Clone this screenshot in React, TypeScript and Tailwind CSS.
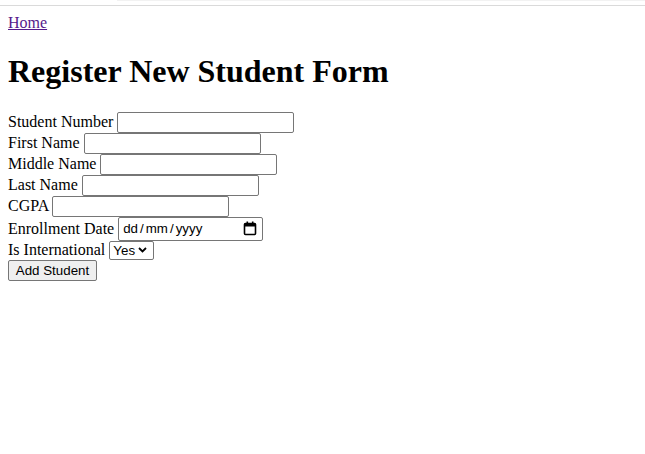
const fieldClass =
  "inline-block align-baseline h-[21px] w-[177px] border border-[#767676] rounded-[2px] bg-white px-[2px] py-[1px] text-[13.33px] leading-[normal] font-['Liberation_Sans',Arial,sans-serif] text-black outline-none";

const CalendarIcon = () => (
  <svg width="14" height="15" viewBox="0 0 14 15" className="block">
    <rect x="1.5" y="2.5" width="11" height="11" rx="1" fill="none" stroke="#000" strokeWidth="1.6" />
    <rect x="1.5" y="2.5" width="11" height="3" fill="#000" />
    <rect x="3.5" y="0.5" width="1.6" height="3" fill="#000" />
    <rect x="8.9" y="0.5" width="1.6" height="3" fill="#000" />
  </svg>
);

const Chevron = () => (
  <svg width="9" height="6" viewBox="0 0 9 6" className="block">
    <path d="M1 1 L4.5 4.5 L8 1" fill="none" stroke="#000" strokeWidth="1.8" />
  </svg>
);

const App = () => {
  return (
    <div className="min-h-[454px] bg-white text-black font-['Liberation_Serif','Times_New_Roman',serif] text-base leading-[normal]">
      <div className="h-[6px] border-b border-[#dadada]">
        <div className="h-px ml-[117px] bg-[#f2f2f2]" />
      </div>

      <div className="m-2">
        <a href="#" className="text-[#551a8b] underline">
          Home
        </a>

        <h1 className="my-[21.44px] text-[32px] font-bold leading-[normal]">Register New Student Form</h1>

        <form onSubmit={(e) => e.preventDefault()}>
          <div>
            <label htmlFor="sn">Student Number</label> <input id="sn" type="text" className={fieldClass} />
          </div>
          <div>
            <label htmlFor="fn">First Name</label> <input id="fn" type="text" className={fieldClass} />
          </div>
          <div>
            <label htmlFor="mn">Middle Name</label> <input id="mn" type="text" className={fieldClass} />
          </div>
          <div>
            <label htmlFor="ln">Last Name</label> <input id="ln" type="text" className={fieldClass} />
          </div>
          <div>
            <label htmlFor="cg">CGPA</label> <input id="cg" type="text" className={fieldClass} />
          </div>
          <div>
            <label>Enrollment Date</label>{" "}
            <span className="inline-flex items-center align-baseline h-[24px] w-[145px] border border-[#767676] rounded-[2px] bg-white pl-[4px] pr-[5px] text-[13.33px] font-['Liberation_Sans',Arial,sans-serif]">
              <span className="flex flex-1">
                <span>dd</span>
                <span className="px-[2px]">/</span>
                <span>mm</span>
                <span className="px-[2px]">/</span>
                <span>yyyy</span>
              </span>
              <CalendarIcon />
            </span>
          </div>
          <div className="h-[19px]">
            <label>Is International</label>{" "}
            <span className="inline-flex items-center align-baseline h-[19px] w-[45px] border border-[#767676] rounded-[2px] bg-white pl-[3px] pr-[3px] gap-[3px] text-[13.33px] font-['Liberation_Sans',Arial,sans-serif]">
              <span>Yes</span>
              <Chevron />
            </span>
          </div>
          <div>
            <button
              type="submit"
              className="h-[21px] w-[89px] border border-[#767676] rounded-[2px] bg-[#efefef] px-[6px] text-[13.33px] leading-[normal] font-['Liberation_Sans',Arial,sans-serif] text-black"
            >
              Add Student
            </button>
          </div>
        </form>
      </div>
    </div>
  );
};

export default App;
